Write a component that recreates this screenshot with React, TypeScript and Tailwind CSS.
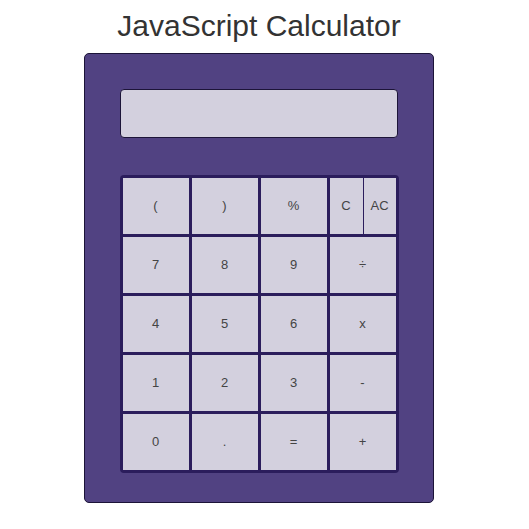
const keys = [
  ['(', ')', '%'],
  ['7', '8', '9', '÷'],
  ['4', '5', '6', 'x'],
  ['1', '2', '3', '-'],
  ['0', '.', '=', '+'],
]

const Key = ({ label }: { label: string }) => (
  <button className="flex items-center justify-center bg-[#d3d0de] text-[13px] text-[#444]">
    {label}
  </button>
)

export default function App() {
  return (
    <div className="flex min-h-[529px] flex-col items-center bg-white pr-[11px] font-['Liberation_Sans',Arial,sans-serif]">
      <h1 className="mt-[6px] text-[30px] leading-[40px] text-[#333]">JavaScript Calculator</h1>

      <div className="mt-[7px] flex h-[450px] w-[350px] flex-col items-center rounded-[5px] border border-[#1c1438] bg-[#514282] pt-[35px]">
        {/* display */}
        <div className="h-[49px] w-[278px] rounded-[4px] border border-[#1c1438] bg-[#d3d0de]" />

        {/* keypad */}
        <div className="mt-[37px] grid w-[279px] grid-cols-[repeat(4,66px)] grid-rows-[repeat(5,56px)] gap-[3px] rounded-[4px] border-[3px] border-[#2b1d5c] bg-[#2b1d5c]">
          {keys[0].map((k) => (
            <Key key={k} label={k} />
          ))}
          <div className="flex gap-px">
            <button className="flex w-[33px] items-center justify-center bg-[#d3d0de] text-[13px] text-[#444]">
              C
            </button>
            <button className="flex flex-1 items-center justify-center bg-[#d3d0de] text-[13px] text-[#444]">
              AC
            </button>
          </div>
          {keys.slice(1).flat().map((k) => (
            <Key key={k} label={k} />
          ))}
        </div>
      </div>
    </div>
  )
}
